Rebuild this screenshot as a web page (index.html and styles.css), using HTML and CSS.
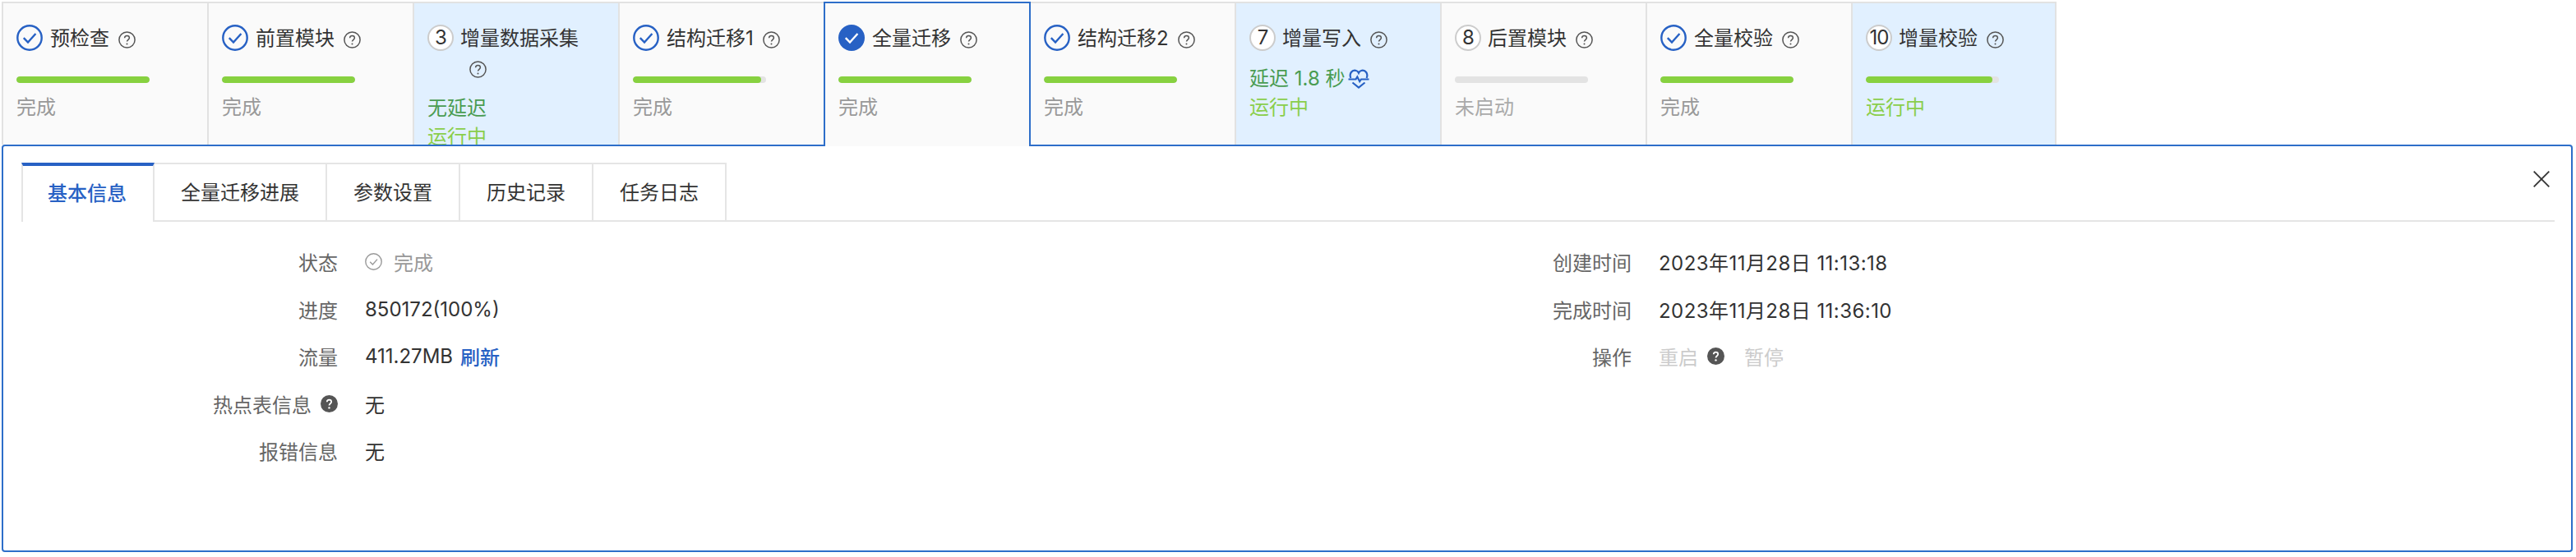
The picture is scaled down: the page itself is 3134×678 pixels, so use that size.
FILE: index.html

```html
<!DOCTYPE html>
<html lang="zh-CN">
<head>
  <meta charset="UTF-8" />
  <meta name="viewport" content="width=device-width, initial-scale=1.0"/>
  <title>全量迁移</title>
  <link rel="stylesheet" href="styles.css">
</head>
<body>
  <svg class="sprite" xmlns="http://www.w3.org/2000/svg">
    <symbol id="i-help" viewBox="0 0 21 21">
      <circle cx="10.5" cy="10.5" r="9.6" fill="none" stroke="currentColor" stroke-width="1.5"/>
      <path d="M7.6 8.2c0-1.7 1.3-2.8 2.9-2.8s2.9 1.1 2.9 2.6c0 2.3-2.9 2.3-2.9 4.6" fill="none" stroke="currentColor" stroke-width="1.5"/>
      <circle cx="10.5" cy="15.4" r="1" fill="currentColor"/>
    </symbol>
    <symbol id="i-help-solid" viewBox="0 0 21 21">
      <circle cx="10.5" cy="10.5" r="10.5" fill="currentColor"/>
      <path d="M7.8 8.3c0-1.6 1.2-2.7 2.7-2.7s2.7 1 2.7 2.5c0 2.2-2.7 2.2-2.7 4.4" fill="none" stroke="#fff" stroke-width="1.8"/>
      <circle cx="10.5" cy="15.4" r="1.2" fill="#fff"/>
    </symbol>
    <symbol id="i-done" viewBox="0 0 32 32">
      <circle cx="16" cy="16" r="14.7" fill="none" stroke="currentColor" stroke-width="2.4"/>
      <path d="M8.8 16.2l5.2 5.4 9.4-10.6" fill="none" stroke="currentColor" stroke-width="2.4"/>
    </symbol>
    <symbol id="i-done-solid" viewBox="0 0 32 32">
      <circle cx="16" cy="16" r="16" fill="currentColor"/>
      <path d="M8.8 16.2l5.2 5.4 9.4-10.6" fill="none" stroke="#fff" stroke-width="2.4"/>
    </symbol>
  </svg>

  <div class="steps">
    <div class="step">
      <div class="step-head">
        <svg class="step-icon"><use href="#i-done"/></svg>
        <div class="step-title">预检查<svg class="help"><use href="#i-help"/></svg></div>
      </div>
      <div class="bar"><div class="bar-fill" style="width:100%"></div></div>
      <div class="step-text">完成</div>
    </div>
    <div class="step">
      <div class="step-head">
        <svg class="step-icon"><use href="#i-done"/></svg>
        <div class="step-title">前置模块<svg class="help"><use href="#i-help"/></svg></div>
      </div>
      <div class="bar"><div class="bar-fill" style="width:100%"></div></div>
      <div class="step-text">完成</div>
    </div>
    <div class="step running">
      <div class="step-head">
        <span class="step-num">3</span>
        <div class="step-title">增量数据采集<svg class="help"><use href="#i-help"/></svg></div>
      </div>
      <div class="step-delay">无延迟</div>
      <div class="step-text green">运行中</div>
    </div>
    <div class="step">
      <div class="step-head">
        <svg class="step-icon"><use href="#i-done"/></svg>
        <div class="step-title">结构迁移1<svg class="help"><use href="#i-help"/></svg></div>
      </div>
      <div class="bar"><div class="bar-fill" style="width:96%"></div></div>
      <div class="step-text">完成</div>
    </div>
    <div class="step active">
      <div class="step-head">
        <svg class="step-icon"><use href="#i-done-solid"/></svg>
        <div class="step-title">全量迁移<svg class="help"><use href="#i-help"/></svg></div>
      </div>
      <div class="bar"><div class="bar-fill" style="width:100%"></div></div>
      <div class="step-text">完成</div>
    </div>
    <div class="step">
      <div class="step-head">
        <svg class="step-icon"><use href="#i-done"/></svg>
        <div class="step-title">结构迁移2<svg class="help"><use href="#i-help"/></svg></div>
      </div>
      <div class="bar"><div class="bar-fill" style="width:100%"></div></div>
      <div class="step-text">完成</div>
    </div>
    <div class="step running">
      <div class="step-head">
        <span class="step-num">7</span>
        <div class="step-title">增量写入<svg class="help"><use href="#i-help"/></svg></div>
      </div>
      <div class="step-delay">延迟 1.8 秒
        <svg class="pulse" viewBox="0 0 26 24">
          <path d="M3.4 11C1 5.4 5 1 9.2 1.8 11 2.2 12.4 3.4 13 4.8 13.6 3.4 15 2.2 16.8 1.8 21 1 25 5.4 22.6 11" fill="none" stroke="currentColor" stroke-width="2.2"/>
          <path d="M.5 12.5H9.5L11.3 9.5 14.2 15.2 16 12.5H25.5" fill="none" stroke="currentColor" stroke-width="2.2"/>
          <path d="M5.5 16.5L13 22.5 20.5 16.5" fill="none" stroke="currentColor" stroke-width="2.2"/>
        </svg>
      </div>
      <div class="step-text green">运行中</div>
    </div>
    <div class="step">
      <div class="step-head">
        <span class="step-num">8</span>
        <div class="step-title">后置模块<svg class="help"><use href="#i-help"/></svg></div>
      </div>
      <div class="bar"></div>
      <div class="step-text muted">未启动</div>
    </div>
    <div class="step">
      <div class="step-head">
        <svg class="step-icon"><use href="#i-done"/></svg>
        <div class="step-title">全量校验<svg class="help"><use href="#i-help"/></svg></div>
      </div>
      <div class="bar"><div class="bar-fill" style="width:100%"></div></div>
      <div class="step-text">完成</div>
    </div>
    <div class="step running last">
      <div class="step-head">
        <span class="step-num">10</span>
        <div class="step-title">增量校验<svg class="help"><use href="#i-help"/></svg></div>
      </div>
      <div class="bar"><div class="bar-fill" style="width:95%"></div></div>
      <div class="step-text green">运行中</div>
    </div>
  </div>

  <div class="panel">
    <svg class="close" viewBox="0 0 20 20">
      <path d="M.7 .7L19.3 19.3M19.3 .7L.7 19.3" fill="none" stroke="#333" stroke-width="1.8"/>
    </svg>

    <div class="tabs">
      <div class="tab current">基本信息</div>
      <div class="tab">全量迁移进展</div>
      <div class="tab">参数设置</div>
      <div class="tab">历史记录</div>
      <div class="tab">任务日志</div>
    </div>

    <div class="info">
      <div class="info-col">
        <div class="row">
          <div class="row-label">状态</div>
          <div class="row-value gray">
            <svg class="state-icon" viewBox="0 0 21 21">
              <circle cx="10.5" cy="10.5" r="9.7" fill="none" stroke="currentColor" stroke-width="1.4"/>
              <path d="M6.2 10.8l3.2 3.2 5.6-6.4" fill="none" stroke="currentColor" stroke-width="1.4"/>
            </svg>
            完成
          </div>
        </div>
        <div class="row">
          <div class="row-label">进度</div>
          <div class="row-value">850172(100%)</div>
        </div>
        <div class="row">
          <div class="row-label">流量</div>
          <div class="row-value">411.27MB <a class="link">刷新</a></div>
        </div>
        <div class="row">
          <div class="row-label">热点表信息<svg class="help-solid"><use href="#i-help-solid"/></svg></div>
          <div class="row-value">无</div>
        </div>
        <div class="row">
          <div class="row-label">报错信息</div>
          <div class="row-value">无</div>
        </div>
      </div>
      <div class="info-col">
        <div class="row">
          <div class="row-label">创建时间</div>
          <div class="row-value date">2023年11月28日 11:13:18</div>
        </div>
        <div class="row">
          <div class="row-label">完成时间</div>
          <div class="row-value date">2023年11月28日 11:36:10</div>
        </div>
        <div class="row">
          <div class="row-label">操作</div>
          <div class="row-value disabled">
            重启<svg class="help-solid"><use href="#i-help-solid"/></svg><span class="pause">暂停</span>
          </div>
        </div>
      </div>
    </div>
  </div>
</body>
</html>
```

FILE: styles.css

```css
body {
  margin: 0;
  padding: 2px 0 0 2px;
  background: #fff;
  color: #333;
  font-family: Inter, 'Noto Sans CJK SC', sans-serif;
  font-size: 24px;
}
.sprite {
  display: none;
}
.steps {
  display: flex;
  height: 174px;
}
.step {
  box-sizing: border-box;
  flex: none;
  width: 250px;
  height: 174px;
  padding: 24px 20px 0 16px;
  overflow: hidden;
  background: #fafafa;
  border-top: 2px solid #e2e2e2;
  border-left: 2px solid #e2e2e2;
}
.step.running {
  background: #e1f0ff;
}
.step.last {
  border-right: 2px solid #e2e2e2;
}
.step.active {
  position: relative;
  z-index: 2;
  width: 252px;
  height: 176px;
  margin-right: -2px;
  background: #fafafa;
  border-top-color: #2d6ec9;
  border-left-color: #2d6ec9;
  border-right: 2px solid #2d6ec9;
}
.step-head {
  display: flex;
  align-items: flex-start;
  gap: 9px;
}
.step-icon {
  flex: none;
  width: 32px;
  height: 32px;
  margin-top: 2px;
  color: #2761c4;
}
.step-num {
  flex: none;
  box-sizing: border-box;
  width: 32px;
  height: 32px;
  margin-top: 2px;
  margin-right: -1px;
  background: #fff;
  border: 2.5px solid #ccc;
  border-radius: 50%;
  text-align: center;
  line-height: 27px;
  letter-spacing: -1px;
  color: #333;
}
.step-title {
  padding-top: 1px;
  line-height: 36px;
  color: #333;
}
.help {
  width: 21px;
  height: 21px;
  margin-left: 11px;
  vertical-align: -4px;
  color: #555;
}
.bar {
  width: 162px;
  height: 8px;
  margin: 28px 0 12px;
  background: #e3e3e3;
  border-radius: 4px;
  overflow: hidden;
}
.bar-fill {
  height: 100%;
  background: #87d140;
  border-radius: 4px;
}
.step-text {
  line-height: 35px;
  color: #999;
}
.step-text.green {
  color: #8ace4b;
}
.step-text.muted {
  color: #aaa;
}
.step-delay {
  display: flex;
  align-items: center;
  gap: 4px;
  margin-top: 13px;
  line-height: 35px;
  color: #4a9c52;
}
.pulse {
  width: 26px;
  height: 24px;
  color: #2761c4;
}
.panel {
  position: relative;
  box-sizing: border-box;
  width: 3128px;
  height: 496px;
  padding: 20px 20px 0 22px;
  background: #fff;
  border: 2px solid #2d6ec9;
  border-radius: 4px;
}
.close {
  position: absolute;
  top: 30px;
  right: 26px;
  width: 20px;
  height: 20px;
}
.tabs {
  display: flex;
  height: 72px;
  box-sizing: border-box;
  border-bottom: 2px solid #e5e5e5;
}
.tab {
  box-sizing: border-box;
  height: 72px;
  padding: 0 32px;
  line-height: 70px;
  border-top: 2px solid #e5e5e5;
  border-right: 2px solid #e5e5e5;
}
.tab.current {
  padding: 0 32px 0 30px;
  line-height: 68px;
  color: #2761c4;
  font-weight: 500;
  background: #fff;
  border-top: 4px solid #2761c4;
  border-left: 2px solid #e5e5e5;
}
.info {
  display: grid;
  grid-template-columns: 1574px 1fr;
  padding-top: 20px;
}
.row {
  display: flex;
  height: 57.5px;
  align-items: center;
  gap: 33px;
}
.row-label {
  display: flex;
  align-items: center;
  justify-content: flex-end;
  width: 385px;
  color: #666;
}
.row-value {
  display: flex;
  align-items: center;
  gap: 7px;
}
.row-value.gray {
  gap: 14px;
  color: #999;
}
.row-value.date {
  letter-spacing: .45px;
}
.row-value.disabled {
  color: #ccc;
}
.state-icon {
  width: 21px;
  height: 21px;
}
.help-solid {
  flex: none;
  width: 21px;
  height: 21px;
  margin-left: 11px;
  color: #555;
}
.row-value .help-solid {
  margin-left: 4px;
}
.pause {
  margin-left: 17px;
}
.link {
  margin-left: 2px;
  color: #2761c4;
  font-weight: 500;
}
```
